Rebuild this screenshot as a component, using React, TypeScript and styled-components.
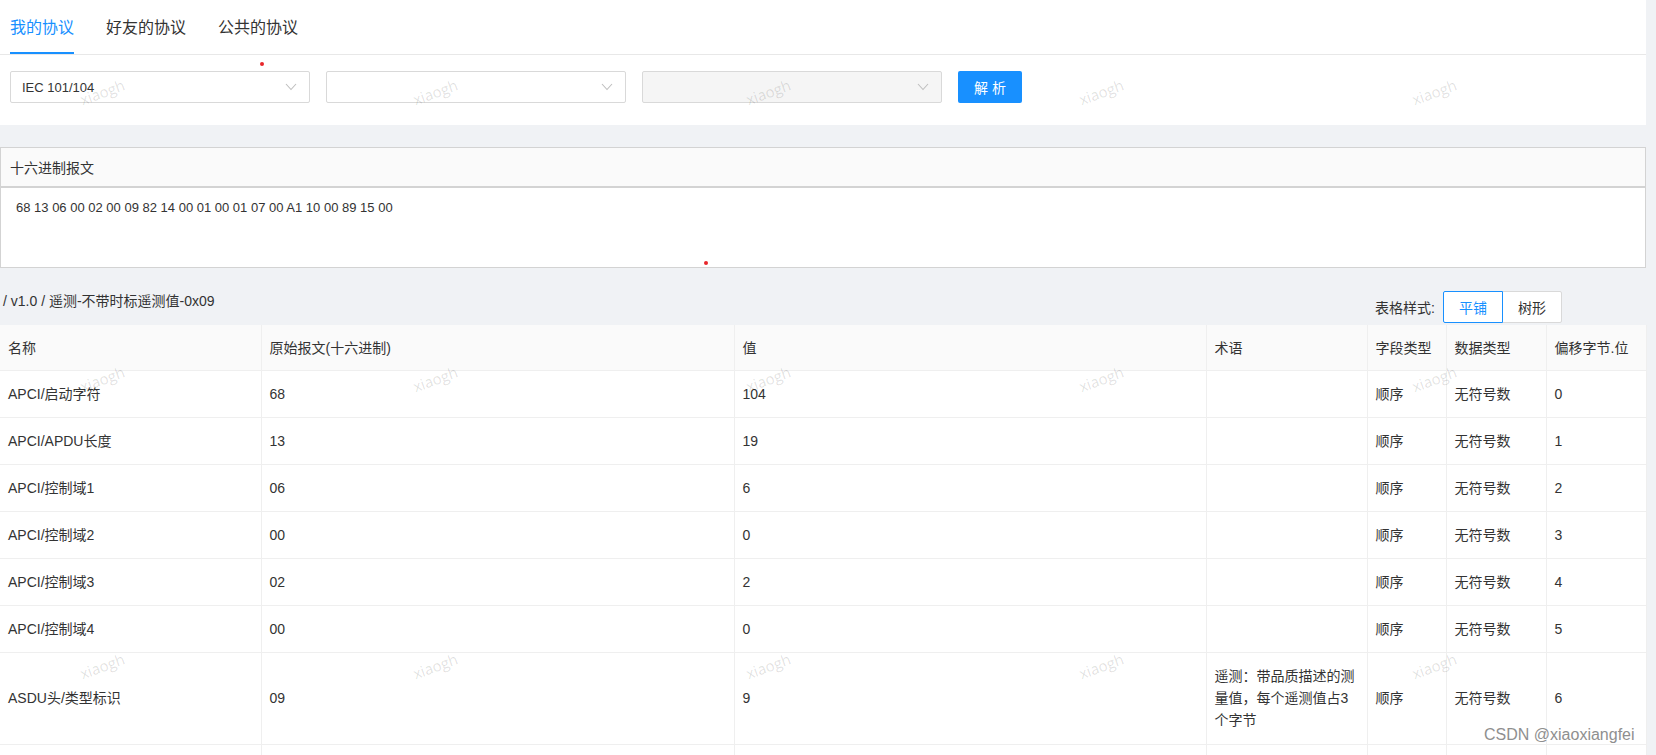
import React from "react";
import styled, { createGlobalStyle } from "styled-components";

const GlobalStyle = createGlobalStyle`
  html, body {
    margin: 0;
    padding: 0;
    overflow: hidden;
    background: #f0f2f5;
  }
  body {
    font-family: "Liberation Sans", "Noto Sans CJK SC", sans-serif;
    color: #333;
  }
`;

const Page = styled.div`
  position: relative;
  width: 1646px;
  min-height: 900px;
`;

const TopPanel = styled.div`
  background: #fff;
`;

const TabBar = styled.div`
  display: flex;
  gap: 32px;
  padding: 0 10px;
  border-bottom: 1px solid #e8e8e8;
`;

const Tab = styled.div<{ $active?: boolean }>`
  font-size: 16px;
  line-height: 22px;
  padding: 17px 0 13px;
  border-bottom: 2px solid ${(p) => (p.$active ? "#1890ff" : "transparent")};
  color: ${(p) => (p.$active ? "#1890ff" : "#333")};
  cursor: pointer;
`;

const Toolbar = styled.div`
  display: flex;
  gap: 16px;
  padding: 16px 10px 22px;
`;

const Select = styled.div<{ $disabled?: boolean }>`
  width: 300px;
  height: 32px;
  box-sizing: border-box;
  border: 1px solid #d9d9d9;
  border-radius: 2px;
  background: ${(p) => (p.$disabled ? "#f5f5f5" : "#fff")};
  display: flex;
  align-items: center;
  justify-content: space-between;
  padding: 0 12px 0 11px;
  font-size: 13px;
  color: #333;
`;

const Button = styled.button`
  width: 64px;
  height: 32px;
  border: none;
  border-radius: 2px;
  background: #1890ff;
  color: #fff;
  font-family: inherit;
  font-size: 14px;
  padding: 0;
`;

const HexBox = styled.div`
  margin-top: 22px;
  border: 1px solid #d3d3d3;
  background: #fff;
`;

const HexHeader = styled.div`
  height: 40px;
  box-sizing: border-box;
  background: #fafafa;
  border-bottom: 2px solid #d3d3d3;
  padding-left: 9px;
  display: flex;
  align-items: center;
  font-size: 14px;
`;

const HexBody = styled.div`
  height: 79px;
  box-sizing: border-box;
  padding: 10px 15px;
  font-family: "Liberation Sans", sans-serif;
  font-size: 13px;
  line-height: 20px;
  color: #333;
`;

const MetaRow = styled.div`
  display: flex;
  justify-content: space-between;
  align-items: flex-start;
  padding-top: 23px;
`;

const Breadcrumb = styled.div`
  font-size: 14px;
  line-height: 20px;
  padding-left: 3px;
`;

const StyleSwitch = styled.div`
  display: flex;
  align-items: center;
  gap: 8px;
  margin-right: 84px;
  font-size: 14px;
`;

const RadioGroup = styled.div`
  display: flex;
`;

const RadioBtn = styled.div<{ $active?: boolean; $first?: boolean }>`
  position: relative;
  z-index: ${(p) => (p.$active ? 1 : 0)};
  width: 60px;
  height: 32px;
  box-sizing: border-box;
  margin-left: ${(p) => (p.$first ? "0" : "-1px")};
  border: 1px solid ${(p) => (p.$active ? "#1890ff" : "#d9d9d9")};
  border-radius: ${(p) => (p.$first ? "2px 0 0 2px" : "0 2px 2px 0")};
  color: ${(p) => (p.$active ? "#1890ff" : "#333")};
  background: #fff;
  display: flex;
  align-items: center;
  justify-content: center;
  font-size: 14px;
`;

const Table = styled.table`
  margin-top: 2px;
  width: 1646px;
  border-collapse: collapse;
  table-layout: fixed;
  background: #fff;
  font-size: 14px;
`;

const Col = styled.col<{ $w: number }>`
  width: ${(p) => p.$w}px;
`;

const Th = styled.th`
  background: #fafafa;
  font-weight: normal;
  text-align: left;
  padding: 12px 8px 11px;
  line-height: 22px;
  border-bottom: 1px solid #efefef;
  border-right: 1px solid #efefef;
  color: #333;
`;

const Td = styled.td<{ $tall?: boolean }>`
  padding: ${(p) => (p.$tall ? "12px 8px 13px" : "12px 8px")};
  line-height: 22px;
  height: 22px;
  border-bottom: 1px solid #efefef;
  border-right: 1px solid #efefef;
  vertical-align: middle;
  color: #333;
`;

const WatermarkLayer = styled.div`
  position: absolute;
  top: -52px;
  left: -64px;
  pointer-events: none;
  display: grid;
  grid-template-columns: repeat(5, 333px);
  grid-auto-rows: 287px;
  z-index: 5;
`;

const WatermarkCell = styled.div`
  display: flex;
  align-items: center;
  justify-content: center;
`;

const WatermarkText = styled.span`
  font-family: "Open Sans", sans-serif;
  font-size: 15px;
  color: rgba(0, 0, 0, 0.13);
  transform: rotate(-20deg);
`;

const Dot = styled.span<{ $x: number; $y: number }>`
  position: absolute;
  left: ${(p) => p.$x}px;
  top: ${(p) => p.$y}px;
  width: 4px;
  height: 4px;
  border-radius: 50%;
  background: #e8262b;
  z-index: 6;
`;

const CsdnMark = styled.div`
  position: absolute;
  left: 1484px;
  top: 725px;
  font-family: "Liberation Sans", sans-serif;
  font-size: 16px;
  line-height: 20px;
  color: #8f8f8f;
  z-index: 6;
  pointer-events: none;
`;

const Chevron = () => (
  <svg width="12" height="8" viewBox="0 0 12 8">
    <polyline points="1,1 6,6.5 11,1" fill="none" stroke="#bfbfbf" strokeWidth="1.1" />
  </svg>
);

const widths = [261, 473, 472, 161, 79, 100, 100];
const headers = ["名称", "原始报文(十六进制)", "值", "术语", "字段类型", "数据类型", "偏移字节.位"];
const rows: string[][] = [
  ["APCI/启动字符", "68", "104", "", "顺序", "无符号数", "0"],
  ["APCI/APDU长度", "13", "19", "", "顺序", "无符号数", "1"],
  ["APCI/控制域1", "06", "6", "", "顺序", "无符号数", "2"],
  ["APCI/控制域2", "00", "0", "", "顺序", "无符号数", "3"],
  ["APCI/控制域3", "02", "2", "", "顺序", "无符号数", "4"],
  ["APCI/控制域4", "00", "0", "", "顺序", "无符号数", "5"],
  ["ASDU头/类型标识", "09", "9", "遥测：带品质描述的测量值，每个遥测值占3个字节", "顺序", "无符号数", "6"],
  ["", "", "", "", "", "", ""],
];

export default function App() {
  return (
    <>
      <GlobalStyle />
      <Page>
        <TopPanel>
          <TabBar>
            <Tab $active>我的协议</Tab>
            <Tab>好友的协议</Tab>
            <Tab>公共的协议</Tab>
          </TabBar>
          <Toolbar>
            <Select>
              <span>IEC 101/104</span>
              <Chevron />
            </Select>
            <Select>
              <span />
              <Chevron />
            </Select>
            <Select $disabled>
              <span />
              <Chevron />
            </Select>
            <Button>解 析</Button>
          </Toolbar>
        </TopPanel>

        <HexBox>
          <HexHeader>十六进制报文</HexHeader>
          <HexBody>68 13 06 00 02 00 09 82 14 00 01 00 01 07 00 A1 10 00 89 15 00</HexBody>
        </HexBox>

        <MetaRow>
          <Breadcrumb>/ v1.0 / 遥测-不带时标遥测值-0x09</Breadcrumb>
          <StyleSwitch>
            <span>表格样式:</span>
            <RadioGroup>
              <RadioBtn $active $first>平铺</RadioBtn>
              <RadioBtn>树形</RadioBtn>
            </RadioGroup>
          </StyleSwitch>
        </MetaRow>

        <Table>
          <colgroup>
            {widths.map((w, i) => (
              <Col key={i} $w={w} />
            ))}
          </colgroup>
          <thead>
            <tr>
              {headers.map((h) => (
                <Th key={h}>{h}</Th>
              ))}
            </tr>
          </thead>
          <tbody>
            {rows.map((r, i) => (
              <tr key={i}>
                {r.map((c, j) => (
                  <Td key={j} $tall={i === 6}>{c}</Td>
                ))}
              </tr>
            ))}
          </tbody>
        </Table>

        <WatermarkLayer>
          {Array.from({ length: 15 }).map((_, i) => (
            <WatermarkCell key={i}>
              <WatermarkText>xiaogh</WatermarkText>
            </WatermarkCell>
          ))}
        </WatermarkLayer>

        <Dot $x={260} $y={62} />
        <Dot $x={704} $y={261} />
        <CsdnMark>CSDN @xiaoxiangfei</CsdnMark>
      </Page>
    </>
  );
}
